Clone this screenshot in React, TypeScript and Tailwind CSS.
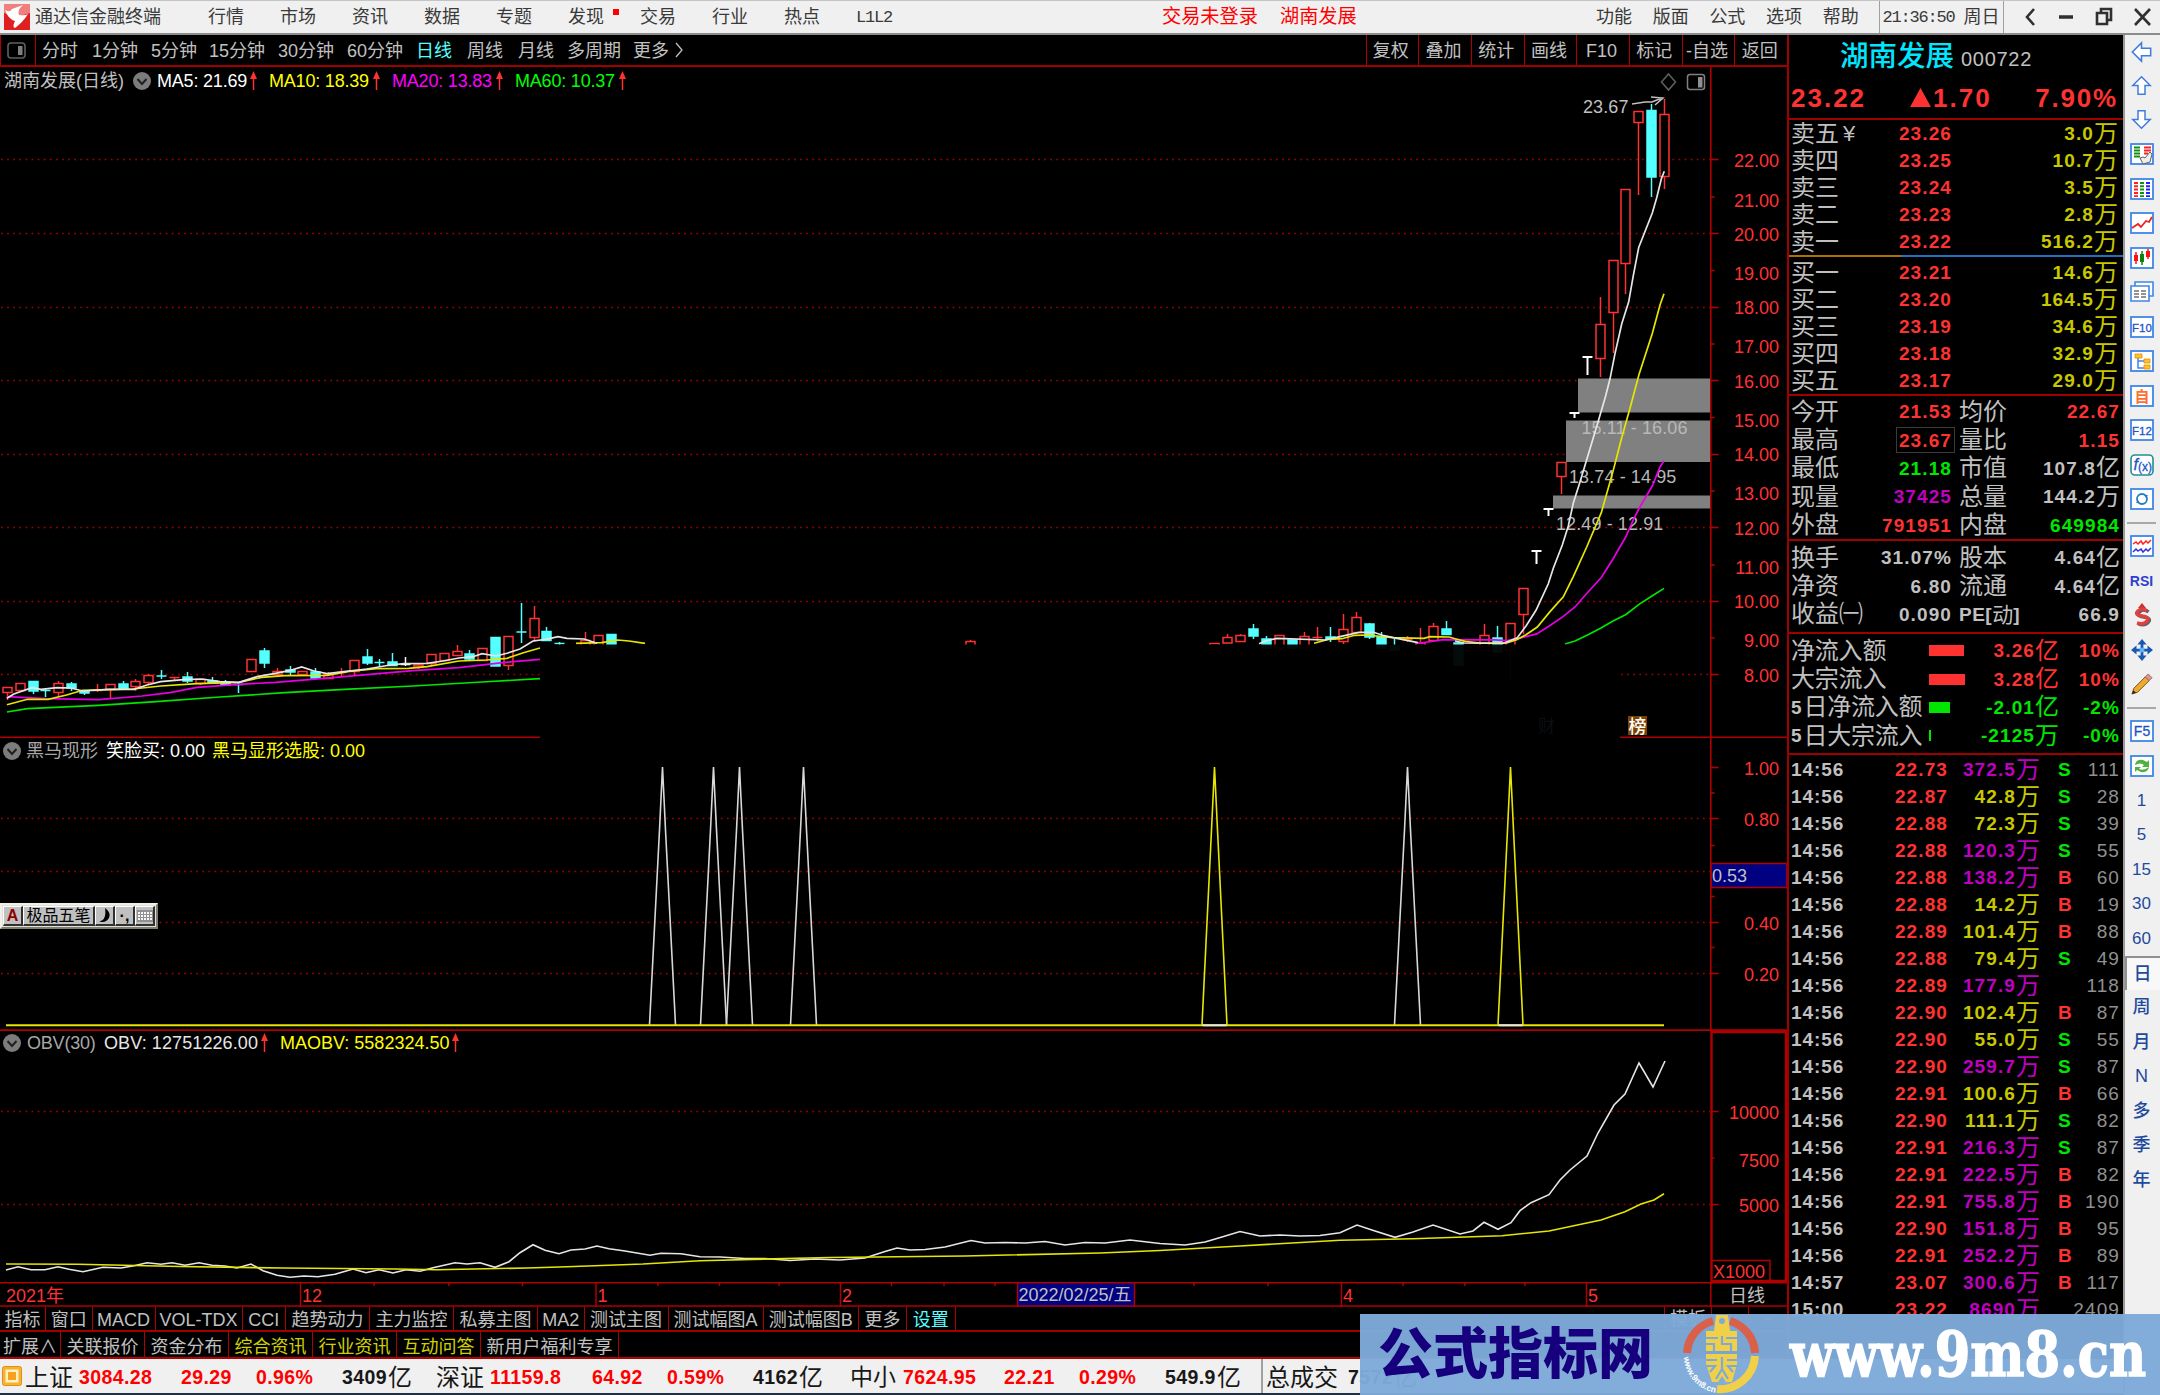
import React from "react";

type Candle = [number, "r" | "c" | "w", number, number, number, number];

/* index, colour, high, body top, body bottom, low */
const CANDLES: Candle[] = [
  [0, "r", 687, 687.5, 692.5, 700], [1, "r", 683, 683.5, 690.5, 691], [2, "c", 681, 681.5, 691, 694],
  [3, "c", 689, 690, 691, 697], [4, "r", 681, 683.5, 692.5, 697], [5, "c", 682, 684, 688, 691],
  [6, "c", 690, 691, 693, 695], [7, "r", 684, 690, 691, 692], [8, "r", 684, 684.5, 689.5, 698],
  [9, "c", 681, 684, 689, 689], [10, "r", 679, 681.5, 686.5, 691], [11, "r", 674, 675.5, 682.5, 684],
  [12, "c", 670, 675.5, 676.5, 679], [13, "r", 677, 677, 678, 680], [14, "c", 672, 677, 681, 683],
  [15, "r", 679, 679.5, 683.5, 685], [16, "c", 677, 681, 683, 683], [17, "c", 680, 683, 685, 685],
  [18, "c", 682, 684, 685, 693], [19, "r", 659, 659.5, 671.5, 672], [20, "c", 648, 651, 663, 668],
  [21, "r", 668, 671.5, 674.5, 677], [22, "c", 666, 670, 672, 676], [23, "r", 671, 671.5, 674.5, 675],
  [24, "c", 668, 672, 678, 680], [25, "r", 672, 674.5, 678.5, 679], [26, "r", 668, 672, 673, 676],
  [27, "r", 660, 660.5, 671.5, 675], [28, "c", 649, 657, 663, 665], [29, "c", 659, 662, 663, 667],
  [30, "c", 653, 662, 665.5, 666], [31, "w", 657, 664, 664.5, 666], [32, "r", 664, 665, 667, 669],
  [33, "r", 654, 654.5, 663.5, 666], [34, "r", 653, 653.5, 660.5, 661], [35, "r", 645, 651.5, 655.5, 656],
  [36, "c", 650, 654, 659, 661], [37, "r", 648, 648.5, 660.5, 661], [38, "c", 637, 637.5, 666, 666],
  [39, "r", 636, 636.5, 665.5, 670], [40, "c", 603, 631.5, 632.5, 643], [41, "r", 606, 618.5, 637.5, 642],
  [42, "c", 627, 631.5, 640.5, 641], [43, "c", 642, 643, 644, 648], [45, "r", 632, 640.5, 648, 648],
  [46, "r", 635, 635.5, 648, 648], [47, "c", 634, 634.5, 648, 648], [75, "r", 640, 641.5, 648, 648],
  [94, "r", 643, 643.5, 650, 650], [95, "r", 634, 637.5, 643, 643], [96, "r", 634, 635.5, 641.5, 642],
  [97, "c", 624, 629, 636, 639], [98, "c", 636, 639, 648, 648], [99, "r", 635, 635.5, 648, 648],
  [100, "c", 640, 640, 648, 648], [101, "r", 632, 636.5, 648, 648], [102, "r", 627, 637, 637.5, 641],
  [103, "c", 627, 637, 639, 642], [104, "r", 614, 629.5, 641.5, 644], [105, "r", 612, 617.5, 632.5, 633],
  [106, "c", 623, 624, 637, 639], [107, "c", 632, 637, 648, 648], [108, "c", 639, 646, 650, 652],
  [109, "r", 636, 639, 639.5, 642], [110, "r", 628, 643, 648, 648], [111, "r", 623, 626.5, 640.5, 641],
  [112, "c", 621, 629, 634.5, 635], [113, "c", 642, 643, 665, 665], [115, "r", 624, 635.5, 650, 650],
  [116, "c", 626, 638, 652, 652], [117, "r", 623, 623.5, 650, 680], [118, "r", 588, 588.5, 614.5, 634],
  [121, "r", 462, 462.5, 476.5, 494], [124, "r", 297, 324.5, 358.5, 377], [125, "r", 260, 260.5, 312.5, 353],
  [126, "r", 189, 189.5, 263.5, 294], [127, "r", 111, 111.5, 122.5, 195], [128, "c", 104, 110.5, 177, 197],
  [129, "r", 99, 114.5, 176.5, 189],
];

/* limit-up days: index, top, bottom */
const TEES: [number, number, number][] = [
  [119, 551, 564], [120, 509, 516], [122, 413, 418], [123, 357, 375],
];

const slot = (i: number) => Math.round(6.9 + 12.846 * i) + 0.5;

const PRICE_LABELS: [string, number][] = [
  ["22.00", 160], ["21.00", 200], ["20.00", 234], ["19.00", 273], ["18.00", 307], ["17.00", 346],
  ["16.00", 381], ["15.00", 420], ["14.00", 454], ["13.00", 493], ["12.00", 528], ["11.00", 567],
  ["10.00", 601], ["9.00", 640], ["8.00", 675],
];
const PRICE_GRID = [159.5, 233.5, 307.5, 380.5, 454.5, 527.5, 601.5];
const PRICE_TICKS = [197, 270.5, 344, 417.5, 491, 565, 638];

const LINE = "#b00000";
const DOT = "#9c0000";

function Dots({ y, x1 = 1, x2 = 1710 }: { y: number; x1?: number; x2?: number }) {
  return <line x1={x1} x2={x2} y1={y} y2={y} stroke={DOT} strokeWidth="1.5" strokeDasharray="1.8 4.3" />;
}

function Label({ x = 1779, y, children, fill = "#ff3232", anchor = "end" }: {
  x?: number; y: number; children: React.ReactNode; fill?: string; anchor?: "end" | "start";
}) {
  return <text x={x} y={y + 6.5} fill={fill} fontSize="18" textAnchor={anchor}>{children}</text>;
}

function PriceChart() {
  return (
    <svg viewBox="0 67 1787 671" className="block h-[671px] w-[1787px]">
      {PRICE_GRID.map((y) => <Dots key={y} y={y} />)}
      <Dots y={674.5} x2={540} />
      <Dots y={674.5} x1={1621} />
      <g fill="#808080">
        <rect x="1578" y="378.5" width="132" height="34" />
        <rect x="1566" y="420.5" width="144" height="41.5" />
        <rect x="1553" y="495.5" width="157" height="13" />
      </g>
      {CANDLES.map(([i, k, hi, top, bot, lo]) => {
        const x = slot(i);
        const color = k === "r" ? "#ff3232" : k === "c" ? "#54ffff" : "#ffffff";
        const thin = bot - top <= 1.2;
        return (
          <g key={i} stroke={color} strokeWidth="1.5">
            <line x1={x} x2={x} y1={hi} y2={k === "r" && !thin ? top : lo} />
            {k === "r" && !thin && lo > bot && <line x1={x} x2={x} y1={bot} y2={lo} />}
            {thin ? (
              <line x1={x - 5} x2={x + 5} y1={top + 0.5} y2={top + 0.5} />
            ) : (
              <rect x={x - 4.5} y={top} width="9" height={bot - top} fill={k === "c" ? color : "#000"} />
            )}
          </g>
        );
      })}
      <g stroke="#fff" strokeWidth="2" fill="none">
        {TEES.map(([i, a, b]) => (
          <path key={i} d={`M${slot(i) - 5} ${a}h10M${slot(i)} ${a}V${b}`} />
        ))}
      </g>
      <g letterSpacing="0.1">
        <Label x={1581.5} y={427} anchor="start" fill="#b8b8b8">15.11 - 16.06</Label>
        <Label x={1569} y={476.5} anchor="start" fill="#b8b8b8">13.74 - 14.95</Label>
        <Label x={1556} y={523} anchor="start" fill="#b8b8b8">12.49 - 12.91</Label>
        <Label x={1583} y={106} anchor="start" fill="#c0c0c0">23.67</Label>
      </g>
      <path d="M1632 104l13-2h7l10-4M1651 97l12 1-8 7" stroke="#c0c0c0" strokeWidth="1.5" fill="none" />
      <g fill="none" strokeWidth="1.7">
        <polyline stroke="#00e600" points="6.9,712 27.5,708.7 98.7,705.3 156,701.7 220,697 284.7,692.7 344.4,689.3 413,686 482,682 540,678.7" />
        <polyline stroke="#00e600" points="1565,644 1575,641 1588,634.7 1601,628 1613,621 1626,614.5 1639,604.4 1652,596 1664,588.4" />
        <polyline stroke="#e600e6" points="6.9,696.7 46,698.7 98.7,699.7 142,696 170,692.7 197,687.3 239,684.3 275.5,682.3 321,678.7 367,674.7 413,670.7 459,667.7 505,662.3 540,659.3" />
        <polyline stroke="#e600e6" points="1418,643.3 1434.6,641 1443,639.7 1495,639.8 1506.7,640.6 1521.7,637.7 1536.7,633.9 1550,625.5 1563,616.6 1575,607 1586.7,593.5 1601.3,577.5 1613,559 1625.7,537 1633.3,519.8 1639,508.5 1652.3,486 1660,467 1664,461" />
        <polyline stroke="#e6e600" points="6.9,704.7 27.5,699.3 48,699.3 66.6,695 82.6,690.3 133,689 160.7,686 197,683.7 239,682.3 261.7,677.3 284.7,675.7 327,675.3 349,671.3 376.5,668.7 408.6,668.3 427,666.7 459,661 486.7,660 507,658.3 523.4,652.7 540,648" />
        <polyline stroke="#e6e600" points="576,643.3 601.5,642.7 617.5,640 629,641 645,643.3" />
        <polyline stroke="#e6e600" points="1314,643.3 1329,639.3 1342,638.7 1354.6,635.3 1367,635 1392.5,637.7 1424,638.3 1430,636.7 1449,637 1456,639 1465,641.4 1480,643 1506.7,643 1516.7,639.8 1526,634.7 1537.3,627 1550,611.6 1563.3,596.8 1573.3,576.6 1586.7,547 1601.3,512.7 1613,471.4 1621.7,437.7 1630,408.3 1639,374.6 1652.3,333.4 1660,305 1664,293.8" />
        <polyline stroke="#e6e6e6" points="6.9,698.3 13.8,694 32,687.7 41,689.3 57,687.7 71,688 82.6,691 108,689.3 134,689.3 147,685 160.7,681.7 183.7,679.7 202,679 220,681.7 239,682.3 257,676.7 275.5,673.3 289,670.7 301.7,667 314,671 327,673.7 344,671.7 367,669 390,665 404,663.7 427,663.3 443,661 459,658 473,656.7 482,653.7 496,656 507,653.3 520,649 533,641 546,639.3 558,636.7 567,638.3 584,639 597,643.3" />
        <polyline stroke="#e6e6e6" points="1259,643.7 1266,640.7 1277,638.3 1325,640 1340,636.7 1359,632.3 1373.6,632.3 1384,635.7 1397,638.3 1418,642.7" />
        <polyline stroke="#e6e6e6" points="1455,641 1464,643 1503,643.5 1517.3,637.7 1526,625.9 1536,610.3 1548.3,583.8 1553.3,568.2 1562.3,545 1568.3,526 1573.3,503 1580,482 1585.7,463 1593.3,437.7 1598.3,421 1605.7,395.7 1610,378.8 1615,353.6 1621.7,324 1628.7,301.8 1633.3,275.7 1638.7,247.5 1652.3,213 1656.7,197.8 1661.3,179 1664.3,171.3" />
      </g>
      <rect x="541" y="644.5" width="1079" height="93.5" fill="#000" fillOpacity="0.955" />
      <g fill="none" stroke="#808080" strokeWidth="1.5">
        <path d="M1668.5 74l7 8-7 8-7-8z" stroke="#606060" />
        <rect x="1687.5" y="74.5" width="17" height="15" rx="2.5" />
      </g>
      <rect x="1698" y="77" width="4.5" height="10.5" fill="#909090" />
      <rect x="1628" y="716" width="19" height="19" fill="#804000" />
      <text x="1628.5" y="732.5" fill="#fff" fontSize="18" fontWeight="500">榜</text>
      <text x="1538" y="732" fill="#0a1010" fontSize="17">财</text>
      <g stroke={LINE} strokeWidth="1.6">
        <line x1="0" x2="540" y1="737.2" y2="737.2" />
        <line x1="1620" x2="1787" y1="737.2" y2="737.2" />
        <line x1="1710.8" x2="1710.8" y1="67" y2="738" />
        {[...PRICE_GRID, 674.5].map((y) => <line key={y} x1="1711" x2="1718.5" y1={y} y2={y} />)}
        {PRICE_TICKS.map((y) => <line key={y} x1="1711" x2="1714.5" y1={y} y2={y} />)}
      </g>
      {PRICE_LABELS.map(([t, y]) => <Label key={t} y={y}>{t}</Label>)}
    </svg>
  );
}

function SignalChart() {
  const white = [51, 55, 57, 62, 109];
  const yellow = [94, 117];
  return (
    <svg viewBox="0 738 1787 293" className="block h-[293px] w-[1787px]">
      {[818.5, 871.5, 922.5, 973.5].map((y) => <Dots key={y} y={y} />)}
      <g fill="none" strokeWidth="1.6">
        {white.map((i) => (
          <path key={i} stroke="#d8d8d8" d={`M${slot(i) - 13} 1025L${slot(i) - 3} 830L${slot(i)} 767L${slot(i) + 3} 830L${slot(i) + 13} 1025`} />
        ))}
        {yellow.map((i) => (
          <path key={i} stroke="#e6e600" d={`M${slot(i) - 12.5} 1025L${slot(i) - 3} 830L${slot(i)} 767L${slot(i) + 3} 830L${slot(i) + 12.5} 1025`} />
        ))}
        <line x1="6" x2="1664" y1="1025.3" y2="1025.3" stroke="#e6e600" strokeWidth="2" />
        {yellow.map((i) => (
          <line key={i} x1={slot(i) - 12} x2={slot(i) + 12} y1="1025.3" y2="1025.3" stroke="#e6e6e6" strokeWidth="2" />
        ))}
      </g>
      <rect x="1711" y="863.5" width="76" height="24" fill="#000080" stroke={LINE} strokeWidth="1.5" />
      <Label x={1712} y={875} anchor="start" fill="#c0c0c0">0.53</Label>
      <g stroke={LINE} strokeWidth="1.6">
        <line x1="0" x2="1787" y1="1030.2" y2="1030.2" strokeWidth="2" />
        <line x1="1710.8" x2="1710.8" y1="738" y2="1031" />
        {[767.5, 818.5, 922.5, 973.5].map((y) => <line key={y} x1="1711" x2="1718.5" y1={y} y2={y} />)}
        {[793, 845.5, 896.5, 947.5].map((y) => <line key={y} x1="1711" x2="1714.5" y1={y} y2={y} />)}
      </g>
      <Label y={768}>1.00</Label>
      <Label y={819}>0.80</Label>
      <Label y={923}>0.40</Label>
      <Label y={974}>0.20</Label>
    </svg>
  );
}

function ObvChart() {
  return (
    <svg viewBox="0 1031 1787 251" className="block h-[251px] w-[1787px]">
      <Dots y={1111.5} />
      <Dots y={1204.5} />
      <g fill="none" strokeWidth="1.6">
        <polyline stroke="#e6e6e6" points="6,1270 18,1266.7 31,1269.7 45,1269.7 58,1266.7 69,1269.3 83,1271.7 103,1267.3 121,1268 134,1265.7 147,1262.7 161,1264.3 172,1262.7 185,1265.3 199,1262.7 212,1265.3 225,1266 237,1268 251,1264 263,1270.7 277,1275.3 290,1277.3 304,1276 318,1276.7 335,1274.3 353,1269 366,1272.7 379,1269.7 393,1273 406,1269.7 420,1271.3 433,1267.7 455,1262.7 467,1264 480,1262.7 495,1267.3 509,1261.7 520,1252.7 533,1244.7 545,1250.3 559,1253.7 571,1250 585,1249 597,1246 609,1248.7 625,1251 650,1255.3 661,1253.3 681,1253.7 700,1256.7 720,1257 745,1258.5 765,1258.5 790,1260.5 815,1259 840,1260 865,1258 885,1251.5 897,1248 910,1250 925,1249.5 945,1247 971,1240.5 985,1243 1005,1242.5 1025,1243 1045,1241.5 1065,1245 1085,1242.5 1105,1243 1130,1240 1160,1243.5 1185,1245 1205,1242 1222,1237 1240,1231.5 1260,1236 1280,1235 1300,1236 1320,1235.5 1340,1232.7 1357,1225 1375,1231 1395,1237.3 1413,1232 1433,1225 1460,1234 1473,1231 1484,1222.3 1498,1229.3 1511,1222.7 1520,1210.7 1531,1202.7 1549,1194.7 1560,1180 1570,1170 1587,1156 1598,1133 1614,1105 1625,1094 1639,1063 1653,1087 1665,1061" />
        <polyline stroke="#e6e600" points="6,1264 78,1264.3 180,1266.5 283,1268 397,1269 437,1269.7 527,1268 567,1266.7 643,1264 700,1260.7 830,1257.5 965,1256 1100,1253 1160,1250.5 1240,1246 1340,1240.3 1413,1238.7 1465,1237 1502,1235.7 1549,1231 1601,1220 1625,1211.7 1641,1204 1654,1200 1664,1193.7" />
      </g>
      <g fill="none" stroke={LINE} strokeWidth="2.4">
        <rect x="1711.5" y="1032" width="74.5" height="249" />
        <path d="M1711 1260.5h59v21" strokeWidth="1.5" />
      </g>
      <g stroke={LINE} strokeWidth="1.5">
        <path d="M1711 1111.5h7.5M1711 1158h3.5M1711 1204.5h7.5" />
      </g>
      <Label y={1112}>10000</Label>
      <Label y={1160}>7500</Label>
      <Label y={1205}>5000</Label>
      <Label x={1713} y={1271} anchor="start">X1000</Label>
    </svg>
  );
}

function TimeAxis() {
  const months: [string, number][] = [["12", 300.5], ["1", 596], ["2", 840.5], ["4", 1341.5], ["5", 1586.5]];
  const ticks = [374, 449, 522.5, 658, 719.5, 779, 891.5, 944, 995, 1194, 1268, 1403, 1465, 1525];
  return (
    <svg viewBox="0 1282 1787 25" className="block h-[25px] w-[1787px]">
      <rect x="1017.5" y="1282" width="117" height="25" fill="#000080" />
      <g stroke={LINE} strokeWidth="1.5">
        <path d="M0 1282.8H1787M0 1306H1787M1710.8 1282V1307M1017.5 1282V1307M1134.5 1282V1307" />
        {months.map(([m, x]) => <line key={m} x1={x} x2={x} y1="1282" y2="1307" />)}
        {ticks.map((x) => <line key={x} x1={x} x2={x} y1="1282" y2="1286" />)}
      </g>
      <Label x={6} y={1295} anchor="start">2021年</Label>
      {months.map(([m, x]) => <Label key={m} x={x + 1.5} y={1295} anchor="start">{m}</Label>)}
      <Label x={1018.5} y={1294} anchor="start" fill="#c0c0c0">2022/02/25/五</Label>
      <Label x={1729} y={1295} anchor="start" fill="#c0c0c0">日线</Label>
    </svg>
  );
}

function Up() {
  return (
    <svg viewBox="0 0 9 20" className="mx-[2px] h-[20px] w-[9px] shrink-0">
      <path d="M4.5 0L8 8H1z" fill="#ff3232" />
      <path d="M4.5 6V19" stroke="#ff3232" strokeWidth="1.5" />
    </svg>
  );
}

function Fold() {
  return (
    <svg viewBox="0 0 18 18" className="size-[18px] shrink-0">
      <circle cx="9" cy="9" r="9" fill="#7c7c7c" />
      <path d="M4.5 7L9 12l4.500-5" stroke="#202020" strokeWidth="2" fill="none" />
    </svg>
  );
}

function TitleBar() {
  const menu = ["行情", "市场", "资讯", "数据", "专题", "发现", "交易", "行业", "热点"];
  return (
    <header className="flex h-[35px] w-full shrink-0 items-center border-t border-b-2 border-t-[#c4c4c4] border-b-[#8c8c8c] bg-[#f0f0f0] text-[18px] text-[#3a3a3a]">
      <svg viewBox="0 0 26 26" className="ml-[4px] size-[26px]">
        <rect width="26" height="26" fill="#e02020" />
        <path d="M0 0h26v9L13 13 0 9z" fill="#f08080" />
        <path d="M1 6Q6 9 8 5L19 1Q13 6 15 11q6 1 9-1-5 8-13 14-3-1 0-7-7-2-10-11z" fill="#fff" />
      </svg>
      <span className="ml-[5px] w-[173px]">通达信金融终端</span>
      {menu.map((m) => (
        <span key={m} className="relative w-[72px]">
          {m}
          {m === "发现" && <i className="absolute top-[1px] left-[45px] size-[6px] bg-[#ff0000]" />}
        </span>
      ))}
      <span className="w-[306px] text-[17px] tracking-[-1.2px] [font-family:'Liberation_Mono',monospace]">L1L2</span>
      <span className="w-[118px] text-[19.200px] text-[#ff0000]">交易未登录</span>
      <span className="w-[316px] text-[19.200px] text-[#ff0000]">湖南发展</span>
      {["功能", "版面", "公式", "选项", "帮助"].map((m) => <span key={m} className="w-[56.700px]">{m}</span>)}
      <span className="flex h-full w-[125px] items-center border-x border-[#a0a0a0] pl-[2px]">
        <span className="w-[81px] text-[17px] tracking-[-1.2px] [font-family:'Liberation_Mono',monospace]">21:36:50</span>
        周日
      </span>
      <svg viewBox="0 0 155 32" className="h-[32px] w-[155px]" fill="none" stroke="#303030" strokeWidth="2.600">
        <path d="M30 8l-7 8 7 8" />
        <path d="M55 16h14" strokeWidth="3.500" />
        <path d="M93 12h10v11H93zM97 12V8h10v11h-4" />
        <path d="M131 8l15 16M146 8l-15 16" />
      </svg>
    </header>
  );
}

function PeriodBar() {
  const items: [string, string][] = [
    ["分时", "w-[50px]"], ["1分钟", "w-[59px]"], ["5分钟", "w-[58px]"], ["15分钟", "w-[69px]"], ["30分钟", "w-[69px]"],
    ["60分钟", "w-[69px]"], ["日线", "w-[51px] text-[#54ffff]"], ["周线", "w-[51px]"], ["月线", "w-[49px]"],
    ["多周期", "w-[66px]"], ["更多", "w-[42px]"],
  ];
  return (
    <div className="flex h-[32px] shrink-0 items-center border-b-2 border-[#a00000] text-[18px] text-[#c0c0c0]">
      <span className="flex h-full w-[36px] items-center justify-center border-x border-[#b00000] pr-[4px]">
        <svg viewBox="0 0 19 17" className="h-[17px] w-[19px]">
          <rect x="1" y="1" width="17" height="15" rx="3" fill="none" stroke="#606060" strokeWidth="1.6" />
          <rect x="11" y="4" width="4.500" height="9" fill="#808080" />
        </svg>
      </span>
      <span className="w-[6px]" />
      {items.map(([t, w]) => <span key={t} className={`shrink-0 pt-[2px] ${w}`}>{t}</span>)}
      <svg viewBox="0 0 8 16" className="h-[16px] w-[8px]" fill="none" stroke="#c0c0c0" strokeWidth="1.300">
        <path d="M1 1l6 7-6 7" />
      </svg>
      <div className="ml-auto flex h-full">
        {["复权", "叠加", "统计", "画线", "F10", "标记", "-自选", "返回"].map((t) => (
          <span key={t} className="flex w-[52.700px] items-center justify-center border-l border-[#b00000] pt-[2px] pr-[3px]">{t}</span>
        ))}
      </div>
    </div>
  );
}

function Charts() {
  return (
    <div className="flex flex-col">
      <div className="relative">
        <PriceChart />
        <div className="absolute top-[3px] left-[4px] flex h-[22px] items-center text-[18px] text-[#c0c0c0]">
          <span className="w-[129px]">湖南发展(日线)</span>
          <Fold />
          <span className="ml-[6px] w-[90px] tracking-[-0.2px] text-white">MA5: 21.69</span><Up />
          <span className="ml-[9px] w-[101px] tracking-[-0.2px] text-[#ffff00]">MA10: 18.39</span><Up />
          <span className="ml-[9px] w-[101px] tracking-[-0.2px] text-[#ff00ff]">MA20: 13.83</span><Up />
          <span className="ml-[9px] w-[101px] tracking-[-0.2px] text-[#00ff00]">MA60: 10.37</span><Up />
        </div>
      </div>
      <div className="relative">
        <SignalChart />
        <div className="absolute top-[2px] left-[3px] flex h-[22px] items-center text-[18px] text-[#a8a8a8]">
          <Fold />
          <span className="ml-[5px] w-[80px]">黑马现形</span>
          <span className="w-[106px] text-white">笑脸买: 0.00</span>
          <span className="text-[#ffff00]">黑马显形选股: 0.00</span>
        </div>
      </div>
      <div className="relative">
        <ObvChart />
        <div className="absolute top-[1px] left-[3px] flex h-[22px] items-center text-[18px] text-[#a8a8a8]">
          <Fold />
          <span className="ml-[6px] w-[77px] tracking-[-0.2px]">OBV(30)</span>
          <span className="w-[154px] tracking-[0.1px] text-[#e6e6e6]">OBV: 12751226.00</span><Up />
          <span className="ml-[9px] w-[169px] text-[#ffff00]">MAOBV: 5582324.50</span><Up />
        </div>
      </div>
      <TimeAxis />
    </div>
  );
}

function TabRows() {
  const tabs: [string, string][] = [
    ["指标", "w-[46px]"], ["窗口", "w-[46.500px]"], ["MACD", "w-[63px]"], ["VOL-TDX", "w-[87px]"], ["CCI", "w-[43.500px]"],
    ["趋势动力", "w-[84px]"], ["主力监控", "w-[84px]"], ["私募主图", "w-[84px]"], ["MA2", "w-[46.500px]"], ["测试主图", "w-[84px]"],
    ["测试幅图A", "w-[95px]"], ["测试幅图B", "w-[95.500px]"], ["更多", "w-[48px]"], ["设置", "w-[48.500px] text-[#54ffff]"],
  ];
  const extra: [string, string][] = [
    ["扩展∧", "w-[61px]"], ["关联报价", "w-[84px]"], ["资金分布", "w-[84px]"], ["综合资讯", "w-[84px] text-[#d0d000]"],
    ["行业资讯", "w-[84px] text-[#d0d000]"], ["互动问答", "w-[84px] text-[#d0d000]"], ["新用户福利专享", "w-[138px]"],
  ];
  return (
    <div className="flex flex-col text-[18px] text-[#c0c0c0]">
      <div className="flex h-[25px] border-b-2 border-[#a00000]">
        {tabs.map(([t, w]) => (
          <span key={t} className={`flex shrink-0 items-center justify-center border-r border-[#b00000] pt-[3px] ${w}`}>{t}</span>
        ))}
        <span className="ml-auto flex w-[47px] items-center justify-center border-l border-[#b00000]">模板</span>
        <span className="flex w-[37px] items-center justify-center border-l border-[#b00000]">+</span>
        <span className="flex w-[39px] items-center justify-center border-l border-[#b00000]">-</span>
      </div>
      <div className="flex h-[27px] border-b-2 border-[#b00000]">
        {extra.map(([t, w]) => (
          <span key={t} className={`flex shrink-0 items-center justify-center border-r border-[#b00000] pt-[4px] ${w}`}>{t}</span>
        ))}
      </div>
    </div>
  );
}

const NUM = "text-[19px] font-bold tracking-[1.100px]";

function Unit({ v }: { v: string }) {
  const m = v.match(/^([^万亿]*)([万亿]?)$/);
  if (!m) return null;
  return (
    <span className="flex items-center">
      <span className={NUM}>{m[1]}</span>
      {m[2] ? <span className="text-[24px] font-normal tracking-normal">{m[2]}</span> : null}
    </span>
  );
}

function BookRow({ n, p, v, yen }: { n: string; p: string; v: string; yen?: boolean }) {
  return (
    <div className="flex h-[27px] items-center pl-[2px]">
      <span className="flex w-[52px] items-center text-[24px]">{n}{yen && <span className="ml-[4px] text-[22px]">¥</span>}</span>
      <span className={`w-[109px] text-right text-[#ff3232] ${NUM}`}>{p}</span>
      <span className="ml-auto flex text-[#c8c800]"><Unit v={v} /></span>
    </div>
  );
}

function StatRow({ a, av, ac, b, bv, bc, boxed }: {
  a: string; av: string; ac: string; b: string; bv: string; bc: string; boxed?: boolean;
}) {
  return (
    <div className="flex h-[28.400px] items-center pt-[1px] pl-[2px]">
      <span className="w-[76px] text-[24px]">{a}</span>
      <span className="flex w-[88px] justify-end">
        <span className={`flex h-[26px] items-center border pr-[2px] pl-[2px] ${NUM} ${boxed ? "border-[#3a3a3a]" : "border-transparent"} ${ac}`}>{av}</span>
      </span>
      <span className="ml-[4px] flex items-center text-[24px]">
        {b.startsWith("PE") ? <><b className="text-[19px] tracking-[0.500px]">PE[</b><span className="text-[21px]">动</span><b className="text-[19px]">]</b></> : b}
      </span>
      <span className={`ml-auto ${bc}`}><Unit v={bv} /></span>
    </div>
  );
}

function FlowRow({ n, bar, v, p, up }: { n: React.ReactNode; bar: string; v: string; p: string; up?: boolean }) {
  return (
    <div className="flex h-[28.400px] items-center pt-[1px] pl-[2px]">
      <span className="flex w-[138px] items-center text-[24px] tracking-[-0.200px]">{n}</span>
      <i className={`h-[11px] ${bar} ${up ? "bg-[#ff3232]" : "bg-[#00e600]"}`} />
      <span className={`ml-auto ${up ? "text-[#ff3232]" : "text-[#00e600]"}`}><Unit v={v} /></span>
      <span className={`w-[61px] text-right ${NUM} ${up ? "text-[#ff3232]" : "text-[#00e600]"}`}>{p}</span>
    </div>
  );
}

/* time, price, amount, large order, side, count */
const TRADES: [string, string, string, boolean, string, string][] = [
  ["14:56", "22.73", "372.5万", true, "S", "111"], ["14:56", "22.87", "42.8万", false, "S", "28"],
  ["14:56", "22.88", "72.3万", false, "S", "39"], ["14:56", "22.88", "120.3万", true, "S", "55"],
  ["14:56", "22.88", "138.2万", true, "B", "60"], ["14:56", "22.88", "14.2万", false, "B", "19"],
  ["14:56", "22.89", "101.4万", false, "B", "88"], ["14:56", "22.88", "79.4万", false, "S", "49"],
  ["14:56", "22.89", "177.9万", true, "", "118"], ["14:56", "22.90", "102.4万", false, "B", "87"],
  ["14:56", "22.90", "55.0万", false, "S", "55"], ["14:56", "22.90", "259.7万", true, "S", "87"],
  ["14:56", "22.91", "100.6万", false, "B", "66"], ["14:56", "22.90", "111.1万", false, "S", "82"],
  ["14:56", "22.91", "216.3万", true, "S", "87"], ["14:56", "22.91", "222.5万", true, "B", "82"],
  ["14:56", "22.91", "755.8万", true, "B", "190"], ["14:56", "22.90", "151.8万", true, "B", "95"],
  ["14:56", "22.91", "252.2万", true, "B", "89"], ["14:57", "23.07", "300.6万", true, "B", "117"],
  ["15:00", "23.22", "8690万", true, "", "2409"],
];

function QuotePanel() {
  const red = "text-[#ff3232]";
  const green = "text-[#00e600]";
  const gray = "text-[#c0c0c0]";
  return (
    <aside className="flex h-[1324px] w-[336px] shrink-0 flex-col overflow-hidden border-l-2 border-[#a00000] text-[#c0c0c0]">
      <div className="flex h-[40px] shrink-0 items-center pt-[2px] pl-[51px]">
        <span className="text-[28.500px] font-medium text-[#00e6ff]">湖南发展</span>
        <span className="ml-[7px] mt-[5px] text-[20px] tracking-[0.700px]">000722</span>
      </div>
      <div className="flex h-[45px] shrink-0 items-center justify-between border-b-2 border-[#a00000] pt-[2px] pr-[5px] pl-[2px] text-[26px] font-bold text-[#ff3232]">
        <span className="w-[119px] tracking-[2px]">23.22</span>
        <span className="flex flex-1 items-center tracking-[2px]">
          <svg viewBox="0 0 22 20" className="mr-[2px] h-[19px] w-[21px]"><path d="M11 0l11 20H0z" fill="#ff3232" /></svg>
          1.70
        </span>
        <span className="tracking-[1.800px]">7.90%</span>
      </div>
      <div className="h-[135px] shrink-0 pr-[5px]">
        <BookRow n="卖五" p="23.26" v="3.0万" yen />
        <BookRow n="卖四" p="23.25" v="10.7万" />
        <BookRow n="卖三" p="23.24" v="3.5万" />
        <BookRow n="卖二" p="23.23" v="2.8万" />
        <BookRow n="卖一" p="23.22" v="516.2万" />
      </div>
      <div className="flex h-[2px] shrink-0"><i className="w-[112px] bg-[#b07000]" /><i className="flex-1 bg-[#2070c0]" /></div>
      <div className="h-[139px] shrink-0 border-b-2 border-[#a00000] pt-[2px] pr-[5px]">
        <BookRow n="买一" p="23.21" v="14.6万" />
        <BookRow n="买二" p="23.20" v="164.5万" />
        <BookRow n="买三" p="23.19" v="34.6万" />
        <BookRow n="买四" p="23.18" v="32.9万" />
        <BookRow n="买五" p="23.17" v="29.0万" />
      </div>
      <div className="h-[145px] shrink-0 border-b-2 border-[#a00000] pt-[1px] pr-[3px]">
        <StatRow a="今开" av="21.53" ac={red} b="均价" bv="22.67" bc={red} />
        <StatRow a="最高" av="23.67" ac={red} b="量比" bv="1.15" bc={red} boxed />
        <StatRow a="最低" av="21.18" ac={green} b="市值" bv="107.8亿" bc={gray} />
        <StatRow a="现量" av="37425" ac="text-[#c000c0]" b="总量" bv="144.2万" bc={gray} />
        <StatRow a="外盘" av="791951" ac={red} b="内盘" bv="649984" bc={green} />
      </div>
      <div className="h-[93px] shrink-0 border-b-2 border-[#a00000] pt-[2px] pr-[3px]">
        <StatRow a="换手" av="31.07%" ac={gray} b="股本" bv="4.64亿" bc={gray} />
        <StatRow a="净资" av="6.80" ac={gray} b="流通" bv="4.64亿" bc={gray} />
        <StatRow a="收益㈠" av="0.090" ac={gray} b="PE[动]" bv="66.9" bc={gray} />
      </div>
      <div className="h-[121px] shrink-0 border-b-2 border-[#a00000] pt-[2px] pr-[3px]">
        <FlowRow n="净流入额" bar="w-[35px]" v="3.26亿" p="10%" up />
        <FlowRow n="大宗流入" bar="w-[36px]" v="3.28亿" p="10%" up />
        <FlowRow n={<><b className="mr-[2px] text-[19px]">5</b>日净流入额</>} bar="w-[21px]" v="-2.01亿" p="-2%" />
        <FlowRow n={<><b className="mr-[2px] text-[19px]">5</b>日大宗流入</>} bar="w-[2px]" v="-2125万" p="-0%" />
      </div>
      <div className="flex flex-col pt-[1px]">
        {TRADES.map(([t, p, v, big, side, n], i) => (
          <div key={i} className={`flex h-[27px] shrink-0 items-center pr-[3px] pl-[2px] ${NUM}`}>
            <span className="w-[60px] tracking-[0.900px]">{t}</span>
            <span className="w-[97px] text-right text-[#ff3232]">{p}</span>
            <span className={`flex w-[92px] justify-end ${big ? "text-[#c000c0]" : "text-[#c8c800]"}`}><Unit v={v} /></span>
            <span className={`w-[31px] pl-[18px] ${side === "S" ? "text-[#00e600]" : "text-[#ff3232]"}`}>{side}</span>
            <span className="flex-1 text-right font-normal text-[#909090]">{n}</span>
          </div>
        ))}
      </div>
    </aside>
  );
}

function Framed({ children }: { children?: React.ReactNode }) {
  return (
    <svg viewBox="0 0 24 22" className="h-[22px] w-[24px] overflow-visible">
      <rect x="1" y="1" width="22" height="20" fill="#fff" stroke="#3f86e8" strokeWidth="1.800" />
      {children}
    </svg>
  );
}

function FKey({ n, size }: { n: string; size?: string }) {
  return (
    <Framed>
      <text x="12" y="16" textAnchor="middle" fontSize={size ?? "13"} fill="#1c54c8" stroke="#1c54c8" strokeWidth="0.300">{n}</text>
    </Framed>
  );
}

const arrow = "M1 12L11 2v6h10v8H11v6z";

function Sidebar() {
  const cell = "flex h-[34.500px] shrink-0 items-center justify-center pr-[2px]";
  return (
    <nav className="flex w-[37px] shrink-0 flex-col border-l-2 border-[#9a9a9a] bg-[#f0f0f0] text-[17px] text-[#1e4a9c]">
      <span className="flex h-[33px] shrink-0 items-center justify-center pr-[2px]">
        <svg viewBox="0 0 22 24" className="h-[22px] w-[21px]"><path d={arrow} fill="#fff" stroke="#3f7ce0" strokeWidth="1.700" /></svg>
      </span>
      <span className={cell}>
        <svg viewBox="0 0 22 24" className="h-[21px] w-[23px] rotate-90"><path d={arrow} fill="#fff" stroke="#3f7ce0" strokeWidth="1.700" /></svg>
      </span>
      <span className={cell}>
        <svg viewBox="0 0 22 24" className="h-[21px] w-[23px] -rotate-90"><path d={arrow} fill="#fff" stroke="#3f7ce0" strokeWidth="1.700" /></svg>
      </span>
      <span className={cell}>
        <Framed>
          <path d="M4 4.500h6M4 7.500h6M4 10.500h6M4 13.500h6" stroke="#109010" strokeWidth="1.800" />
          <path d="M14 4.500h7M14 7.500h7M14 10.500h4" stroke="#ff2020" strokeWidth="1.800" />
          <path d="M10 15l3-1 2 1 5-6 2 2-2 8-7 2z" fill="#eee" stroke="#606060" />
        </Framed>
      </span>
      <span className={cell}>
        <Framed>
          <path d="M6 4v15" stroke="#ff2020" strokeWidth="4" strokeDasharray="2 1.300" />
          <path d="M12 4v15" stroke="#109010" strokeWidth="4" strokeDasharray="2 1.300" />
          <path d="M18 4v15" stroke="#2020ff" strokeWidth="4" strokeDasharray="2 1.300" />
        </Framed>
      </span>
      <span className={cell}>
        <Framed><path d="M2 16l6-4 3 3 5-6 3 1 3-5" stroke="#f02020" strokeWidth="1.800" fill="none" /></Framed>
      </span>
      <span className={cell}>
        <Framed>
          <path d="M6 5v12M18 2v10" stroke="#ff1010" strokeWidth="1.500" /><path d="M12 4v14" stroke="#108010" strokeWidth="1.500" />
          <rect x="4" y="8" width="4" height="6" fill="#ff1010" /><rect x="16" y="4" width="4" height="6" fill="#ff1010" />
          <rect x="10" y="7" width="4" height="8" fill="#108010" />
        </Framed>
      </span>
      <span className={cell}>
        <svg viewBox="0 0 24 22" className="h-[22px] w-[24px]">
          <path d="M5 1h18v14H5z" fill="#fff" stroke="#3f86e8" strokeWidth="1.600" />
          <path d="M1 5h18v15H1z" fill="#fff" stroke="#3f86e8" strokeWidth="1.600" />
          <path d="M4 10h5M4 13h5M4 16h5M11 10h5M11 13h5M11 16h5" stroke="#707070" strokeWidth="1.400" />
        </svg>
      </span>
      <span className={cell}><FKey n="F10" size="11.500" /></span>
      <span className={cell}>
        <Framed>
          <path d="M8 7v11h7M8 11h7" stroke="#3f86e8" strokeWidth="1.500" fill="none" />
          <path d="M5 4h7v4H5zM14 9h6v4h-6zM14 15h6v4h-6z" fill="#ffc030" stroke="#e09000" strokeWidth="0.800" />
        </Framed>
      </span>
      <span className={cell}>
        <Framed><text x="12" y="16.500" textAnchor="middle" fontSize="15" fontWeight="700" fill="#ff7030">自</text></Framed>
      </span>
      <span className={cell}><FKey n="F12" size="11.500" /></span>
      <span className={cell}>
        <svg viewBox="0 0 24 22" className="h-[22px] w-[24px]">
          <rect x="1" y="1" width="22" height="20" rx="4" fill="#fff" stroke="#209090" strokeWidth="1.600" />
          <text x="3.500" y="16" fontSize="16" fontStyle="italic" fill="#1c54c8" stroke="#1c54c8" strokeWidth="0.300">f</text>
          <text x="8" y="17" fontSize="12" fill="#1c54c8" stroke="#1c54c8" strokeWidth="0.300">(x)</text>
        </svg>
      </span>
      <span className={cell}>
        <Framed>
          <circle cx="12" cy="11" r="5" fill="none" stroke="#2080c0" strokeWidth="1.800" />
          <path d="M6 15l2-3 2 3zM18 7l-2 3-2-3z" fill="#2080c0" />
        </Framed>
      </span>
      <span className="flex h-[12.500px] items-center justify-center pr-[2px]"><i className="h-[2px] w-[29px] bg-[#a8a8a8]" /></span>
      <span className={cell}>
        <Framed>
          <path d="M3 9l3-2 2 2 3-3 2 3 3-3 2 2 3-3" stroke="#ff2020" strokeWidth="1.500" fill="none" />
          <path d="M3 17l3-3 2 2 3-2 2 3 3-3 2 2 3-3" stroke="#3030e0" strokeWidth="1.500" fill="none" />
        </Framed>
      </span>
      <span className={`${cell} text-[14px] font-bold text-[#3040d0]`}>RSI</span>
      <span className={cell}>
        <svg viewBox="0 0 20 24" className="h-[24px] w-[20px]">
          <path d="M10 0l4 5H6z" fill="#d03030" />
          <path d="M15 8Q10 4 6 8t4 5 5 5-10 2" transform="translate(1.500 1)" stroke="#606060" strokeWidth="3.500" fill="none" />
          <path d="M15 8Q10 4 6 8t4 5 5 5-10 2" stroke="#e04040" strokeWidth="3.500" fill="none" />
        </svg>
      </span>
      <span className={cell}>
        <svg viewBox="0 0 24 24" className="size-[22px]">
          <path d="M12 0l5 6H7zM12 24l5-6H7zM0 12l6-5v10zM24 12l-6-5v10z" fill="#1858b0" />
          <path d="M12 4v16M4 12h16" stroke="#1858b0" strokeWidth="3" />
          <rect x="9.500" y="9.500" width="5" height="5" fill="#60b0ff" />
        </svg>
      </span>
      <span className={cell}>
        <svg viewBox="0 0 24 24" className="size-[23px]">
          <path d="M2 22l2-6L16 4l4 4L8 20z" fill="#f0a830" stroke="#705020" />
          <path d="M16 4l3-3 4 4-3 3z" fill="#e89090" stroke="#907070" />
          <path d="M2 22l1.500-4 3 2.500z" fill="#303030" />
        </svg>
      </span>
      <span className="flex h-[12.500px] items-center justify-center pr-[2px]"><i className="h-[2px] w-[29px] bg-[#a8a8a8]" /></span>
      <span className={cell}><FKey n="F5" size="14" /></span>
      <span className={cell}>
        <Framed>
          <path d="M5 10q1-6 8-5l4 2 2-2v7h-7l2-2q-4-3-9 0zM19 12q-1 6-8 5l-4-2-2 2v-5h6l-2 2q5 2 10-2z" fill="#50b040" />
        </Framed>
      </span>
      {["1", "5", "15", "30", "60"].map((t) => <span key={t} className={cell}>{t}</span>)}
      <span className={`${cell} border-t-2 border-l-2 border-[#909090] bg-[#f8f8f8] text-[18px] font-medium`}>日</span>
      {["周", "月", "N", "多", "季", "年"].map((t) => <span key={t} className={`${cell} text-[18px] font-medium`}>{t}</span>)}
    </nav>
  );
}

function StatusBar() {
  const num = "text-[19.500px] font-bold tracking-[0.400px]";
  const cells: [string, string][] = [
    ["上证", "w-[54px] text-[24px]"], ["3084.28", `w-[102px] text-[#ff0000] ${num}`], ["29.29", `w-[75px] text-[#ff0000] ${num}`],
    ["0.96%", `w-[86px] text-[#ff0000] ${num}`], ["3409", `w-[46px] ${num}`], ["亿", "w-[48px] text-[24px]"],
    ["深证", "w-[54px] text-[24px]"], ["11159.8", `w-[102px] text-[#ff0000] ${num}`], ["64.92", `w-[75px] text-[#ff0000] ${num}`],
    ["0.59%", `w-[86px] text-[#ff0000] ${num}`], ["4162", `w-[46px] ${num}`], ["亿", "w-[51px] text-[24px]"],
    ["中小", "w-[53px] text-[23px]"], ["7624.95", `w-[101px] text-[#ff0000] ${num}`], ["22.21", `w-[75px] text-[#ff0000] ${num}`],
    ["0.29%", `w-[86px] text-[#ff0000] ${num}`], ["549.9", `w-[52px] ${num}`], ["亿", "w-[44px] text-[24px]"],
  ];
  return (
    <footer className="flex h-[36px] w-[2123px] shrink-0 items-center border-b-2 border-[#203040] bg-[#f0f0f0] text-[#181818]">
      <svg viewBox="0 0 20 20" className="mr-[3px] ml-[2px] size-[20px]">
        <rect x="0.500" y="0.500" width="19" height="19" rx="2" fill="#f8b030" stroke="#e09010" />
        <rect x="3.500" y="3.500" width="13" height="13" fill="#fff0c0" />
        <rect x="6" y="6" width="8" height="8" fill="#f8a020" />
      </svg>
      {cells.map(([t, w], i) => <span key={i} className={`shrink-0 pt-[3px] ${w}`}>{t}</span>)}
      <span className="h-full w-[5px] shrink-0 border-l-2 border-[#a0a0a0]" />
      <span className="w-[82px] pt-[3px] text-[24px]">总成交</span>
      <span className={`pt-[3px] ${num}`}>7572</span>
      <span className="pt-[3px] text-[24px]">亿</span>
    </footer>
  );
}

function ImeBar() {
  const key = "flex h-full items-center justify-center border-t border-r-2 border-b-2 border-l border-t-white border-r-[#303030] border-b-[#303030] border-l-white bg-[#c0c0c0]";
  return (
    <div className="absolute top-[903px] left-0 flex h-[26px] w-[158px] border-2 border-t-[#f0f0e8] border-r-[#808070] border-b-[#808070] border-l-[#f0f0e8] bg-[#e0e0d8] p-[1px] text-[16px] text-black">
      <span className={`${key} w-[20px] font-bold text-[#900000]`}>A</span>
      <span className={`${key} w-[72px]`}>极品五笔</span>
      <span className={`${key} w-[20px]`}>
        <svg viewBox="0 0 12 16" className="h-[15px] w-[12px]"><path d="M6 0q7 5 4 11-4 6-10 3 8-1 6-14z" fill="#000" /></svg>
      </span>
      <span className={`${key} w-[20px] font-bold`}>·,</span>
      <span className={`${key} flex-1`}>
        <svg viewBox="0 0 16 12" className="h-[12px] w-[16px]">
          <rect width="16" height="12" fill="#909090" />
          <path d="M1 3h14M1 6h14M1 9h14" stroke="#f8f8f8" strokeWidth="2" strokeDasharray="2 1" />
        </svg>
      </span>
    </div>
  );
}

function Banner() {
  return (
    <div className="absolute top-[1314px] left-[1360px] flex h-[81px] w-[800px] items-center bg-[#7eaad9]/97">
      <span className="ml-[18px] w-[303px] text-[55px] leading-none font-black text-[#17007d]">公式指标网</span>
      <svg viewBox="0 0 80 80" className="h-[80px] w-[80px] shrink-0">
        <path d="M6 38A35 35 0 0 1 32 6" fill="none" stroke="#d9604b" strokeWidth="8" />
        <path d="M49 6A35 35 0 0 1 74 38" fill="none" stroke="#d9604b" strokeWidth="8" />
        <path d="M74 41A35 35 0 0 1 36 74" fill="none" stroke="#f0d048" strokeWidth="8" />
        <path d="M35 0h12l2 16h7v20H25V16h8zM25 39h31v10l-5 18h-6l-4-6-4 6h-6l-6-18z" fill="#f0d048" />
        <circle cx="41" cy="6" r="3" fill="#7eaad9" />
        <g fill="none" stroke="#7eaad9" strokeWidth="2.200">
          <path d="M25 23h12M45 23h11M25 29h8v7M41 21v8h9v7M25 45h11M46 45h10M41 42v12M25 51h9l-5 6M56 51h-9l5 6M41 54l-6 10M41 54l6 10" />
        </g>
        <path id="rim" d="M3 42A38 38 0 0 0 36 78" fill="none" />
        <text fontSize="8.500" fontWeight="700" fill="#fff"><textPath href="#rim">www.9m8.cn</textPath></text>
      </svg>
      <span className="ml-[29px] w-[370px] text-left">
        <span className="inline-block origin-left scale-x-[0.825] text-[62px] leading-none font-bold text-white [font-family:'DejaVu_Serif',serif] [-webkit-text-stroke:1.500px_white]">www.9m8.cn</span>
      </span>
    </div>
  );
}

export default function App() {
  return (
    <div className="relative flex h-[1395px] w-[2160px] flex-col overflow-hidden bg-black leading-none whitespace-nowrap [font-family:'Liberation_Sans','Noto_Sans_CJK_SC',sans-serif]">
      <TitleBar />
      <div className="flex h-[1360px]">
        <div className="flex w-[2123px] shrink-0 flex-col">
          <div className="flex h-[1324px]">
            <div className="flex w-[1787px] shrink-0 flex-col">
              <PeriodBar />
              <Charts />
              <TabRows />
            </div>
            <QuotePanel />
          </div>
          <StatusBar />
        </div>
        <Sidebar />
      </div>
      <ImeBar />
      <Banner />
    </div>
  );
}
